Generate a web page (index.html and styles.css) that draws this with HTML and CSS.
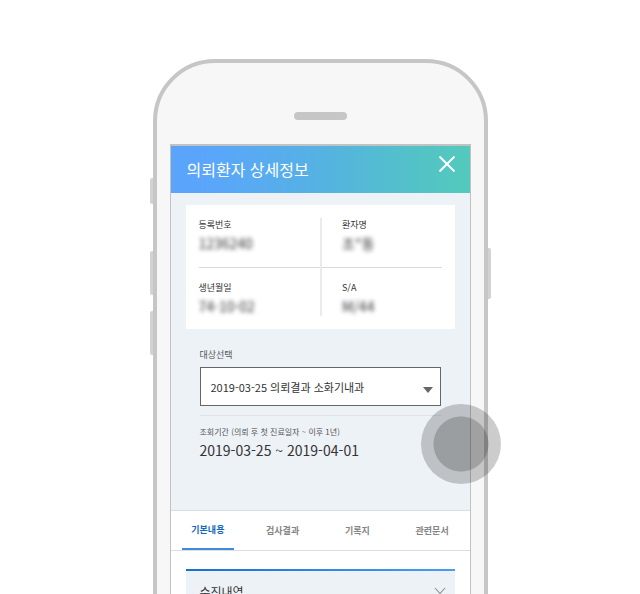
FILE: index.html
```html
<!DOCTYPE html>
<html lang="ko">
<head>
<meta charset="utf-8">
<meta name="viewport" content="width=device-width, initial-scale=1">
<title>의뢰환자 상세정보</title>
<link rel="stylesheet" href="styles.css">
</head>
<body>
<div class="stage">
  <div class="phone">
    <span class="side-key key-mute"></span>
    <span class="side-key key-up"></span>
    <span class="side-key key-down"></span>
    <span class="side-key key-power"></span>
    <div class="body">
      <div class="speaker"></div>
      <main class="screen">
        <header class="topbar">
          <h1>의뢰환자 상세정보</h1>
          <button class="close" type="button" aria-label="닫기">
            <svg width="18" height="18" viewBox="0 0 18 18"><path d="M1.5 1.5 16.5 16.5M16.5 1.5 1.5 16.5" fill="none" stroke="#fff" stroke-width="1.9"/></svg>
          </button>
        </header>
        <section class="summary">
          <dl class="card">
            <div class="cell"><dt>등록번호</dt><dd>1236240</dd></div>
            <div class="cell"><dt>환자명</dt><dd>조*동</dd></div>
            <div class="cell"><dt>생년월일</dt><dd>74-10-02</dd></div>
            <div class="cell"><dt>S/A</dt><dd>M/44</dd></div>
          </dl>
          <div class="filter">
            <label for="target">대상선택</label>
            <div class="select-box">
              <select id="target"><option>2019-03-25 의뢰결과 소화기내과</option></select>
              <svg class="caret" width="10" height="6" viewBox="0 0 10 6"><path d="M0 0H10L5 6Z" fill="#666"/></svg>
            </div>
            <div class="period">
              <p class="period-label">조회기간 (의뢰 후 첫 진료일자 ~ 이후 1년)</p>
              <p class="period-value">2019-03-25 ~ 2019-04-01</p>
            </div>
          </div>
          <span class="touch"></span>
        </section>
        <nav class="tabs">
          <a class="tab active" href="#basic">기본내용</a>
          <a class="tab" href="#results">검사결과</a>
          <a class="tab" href="#records">기록지</a>
          <a class="tab" href="#documents">관련문서</a>
        </nav>
        <section class="details" id="basic">
          <button class="accordion" type="button">
            <span>수진내역</span>
            <svg width="12" height="8" viewBox="0 0 12 8"><path d="M1 1 6 6.5 11 1" fill="none" stroke="#8c8f92" stroke-width="1.1"/></svg>
          </button>
        </section>
      </main>
    </div>
  </div>
</div>
</body>
</html>
```
FILE: styles.css
```css
* { box-sizing: border-box; }

body {
  margin: 0;
  background: #fff;
  color: #333;
  font-family: "Noto Sans CJK KR", "Noto Sans", sans-serif;
}

h1, p, dl, dd { margin: 0; }

button, select { font: inherit; color: inherit; }

.stage {
  height: 100vh;
  padding: 59px 16px 0;
  overflow: hidden;
}

.phone {
  position: relative;
  max-width: 335px;
  margin: 0 auto;
}

.body {
  position: relative;
  padding: 49px 13px 80px;
  border: 4px solid #c6c6c6;
  border-radius: 62px;
  background: #f7f7f7;
}

.side-key {
  position: absolute;
  left: -3px;
  width: 8px;
  border-radius: 2px;
  background: #d2d2d2;
}

.key-mute { top: 119px; height: 26px; }
.key-up { top: 192px; height: 44px; }
.key-down { top: 252px; height: 44px; }
.key-power { top: 189px; right: -3px; left: auto; height: 51px; }

.speaker {
  width: 53px;
  height: 8px;
  margin: 0 auto 24px;
  border-radius: 4px;
  background: #c6c6c6;
}

.screen {
  border: 1px solid #c2c2c2;
  border-top-width: 2px;
  background: #fff;
}

.topbar {
  display: flex;
  align-items: center;
  justify-content: space-between;
  height: 47px;
  padding: 0 14px 0 16px;
  background: linear-gradient(90deg, #5aa4fc 0%, #5aa6fa 15%, #55b2e2 50%, #53c1c9 80%, #53cabb 100%);
  color: #fff;
}

.topbar h1 {
  padding-bottom: 2px;
  font-size: 16px;
  font-weight: 400;
  line-height: 24px;
}

.close {
  display: flex;
  padding: 0 0 12px;
  border: 0;
  background: none;
}

.summary {
  position: relative;
  padding: 12px 15px 50px;
  background: #edf2f7;
}

.card {
  position: relative;
  display: grid;
  grid-template-columns: 1fr 1fr;
  padding: 0 13px;
  background: #fff;
}

.card::before {
  content: "";
  position: absolute;
  top: 13px;
  bottom: 13px;
  left: 50%;
  border-left: 2px solid #ebebeb;
}

.cell {
  height: 62px;
  padding-top: 12px;
}

.cell:nth-child(even) { padding-left: 22px; }

.cell:nth-child(n + 3) { border-top: 1px solid #d9d9d9; }

.cell dt {
  font-size: 9px;
  line-height: 16px;
}

.cell dd {
  color: #333;
  font-size: 14px;
  line-height: 20px;
  filter: blur(2px);
}

.filter { padding: 18px 14px 0; }

.filter label {
  display: block;
  color: #555;
  font-size: 9px;
  line-height: 16px;
}

.select-box {
  position: relative;
  margin-top: 4px;
}

.select-box select {
  display: block;
  width: 100%;
  height: 39px;
  padding: 0 10px;
  border: 1px solid #666;
  border-radius: 0;
  background: #fff;
  font-size: 11px;
  appearance: none;
}

.caret {
  position: absolute;
  top: 20px;
  right: 8px;
  pointer-events: none;
}

.period {
  margin-top: 9px;
  padding-top: 8px;
  border-top: 1px solid #dfe2e6;
}

.period-label {
  color: #555;
  font-size: 8px;
  line-height: 16px;
}

.period-value {
  font-size: 14px;
  line-height: 20px;
}

.touch {
  position: absolute;
  top: 211px;
  right: -31px;
  z-index: 1;
  width: 80px;
  height: 80px;
  border-radius: 50%;
  background: radial-gradient(circle, rgba(0, 0, 0, .35) 27px, rgba(0, 0, 0, .2) 28px);
}

.tabs {
  display: grid;
  grid-template-columns: repeat(4, 1fr);
  border-top: 1px solid #d8dee4;
  border-bottom: 1px solid #dedede;
}

.tab {
  display: flex;
  justify-content: center;
  color: #858585;
  font-size: 9px;
  font-weight: 700;
  line-height: 39px;
  text-decoration: none;
}

.tab.active {
  margin: 0 11px;
  border-bottom: 2px solid #3f8bdc;
  color: #1269bd;
  line-height: 37px;
}

.details { padding: 18px 15px 0; }

.accordion {
  display: flex;
  align-items: center;
  justify-content: space-between;
  width: 100%;
  height: 42px;
  padding: 0 9px 0 14px;
  border: 0;
  border-top: 2px solid #2a82dc;
  border-image: linear-gradient(90deg, #1272cc, #4a9df5) 1;
  background: #edf2f7;
  font-size: 12px;
}
```
